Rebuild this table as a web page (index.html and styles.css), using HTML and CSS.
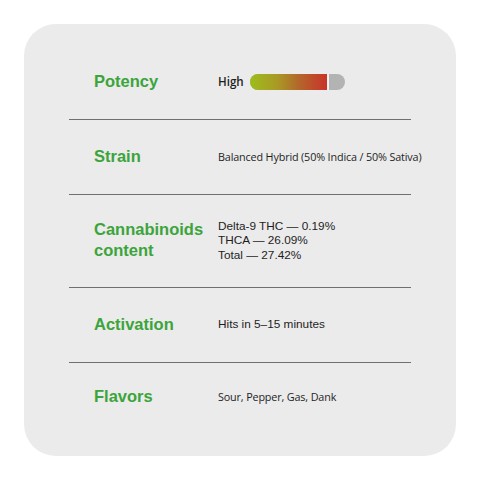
FILE: index.html
```html
<!DOCTYPE html>
<html lang="en">
<head>
<meta charset="utf-8">
<title>Product details</title>
<link rel="stylesheet" href="styles.css">
</head>
<body>
<div class="card">
  <div class="list">
    <div class="row">
      <div class="label">Potency</div>
      <div class="value potency">
        <span class="level">High</span>
        <span class="bar"><span class="fill" style="width:79px"></span></span>
      </div>
    </div>
    <div class="row">
      <div class="label">Strain</div>
      <div class="value soft">Balanced Hybrid (50% Indica / 50% Sativa)</div>
    </div>
    <div class="row tall">
      <div class="label">Cannabinoids<br>content</div>
      <div class="value plain">
        <div>Delta-9 THC — 0.19%</div>
        <div>THCA — 26.09%</div>
        <div>Total — 27.42%</div>
      </div>
    </div>
    <div class="row">
      <div class="label">Activation</div>
      <div class="value plain">Hits in 5–15 minutes</div>
    </div>
    <div class="row last">
      <div class="label">Flavors</div>
      <div class="value soft">Sour, Pepper, Gas, Dank</div>
    </div>
  </div>
</div>
</body>
</html>
```
FILE: styles.css
```css
* { box-sizing: border-box; }
html, body { margin: 0; padding: 0; background: #ffffff; }
body { font-family: "Liberation Sans", Arial, sans-serif; color: #222; }

.card {
  width: 432px;
  height: 432px;
  margin: 24px auto 0;
  background: #ebebeb;
  border-radius: 32px;
  padding: 21px 45px 0;
}

.row {
  display: grid;
  grid-template-columns: 124px 1fr;
  align-items: center;
  padding: 27px 0 28px 25px;
  border-bottom: 1px solid #6f6f6f;
}
.row.tall { padding-top: 24px; padding-bottom: 25px; }
.row.tall .label { line-height: 21px; }
.row.last { border-bottom: none; padding-top: 24px; }

.label {
  font-family: "Liberation Sans", Arial, sans-serif;
  font-weight: 700;
  font-size: 16.5px;
  line-height: 19px;
  color: #3ba43b;
}

.value { font-size: 12px; color: #1e1e1e; white-space: nowrap; }
.value.plain { font-family: "Liberation Sans", Arial, sans-serif; font-size: 11.8px; line-height: 14.3px; }
.value.soft { font-family: "Open Sans", sans-serif; font-size: 10.8px; letter-spacing: -0.15px; }

.potency { display: flex; align-items: center; gap: 6px; }
.level { font-family: "Open Sans", sans-serif; font-weight: 600; font-size: 11.6px; }
.bar {
  display: block;
  width: 95px;
  height: 16px;
  border-radius: 8px;
  background: #b3b3b3;
  overflow: hidden;
}
.fill {
  display: block;
  height: 100%;
  background: linear-gradient(90deg, #9dbd1c 0%, #a99a24 35%, #b4642a 65%, #c9332a 100%);
  border-right: 2px solid #f2f2f2;
}
```
